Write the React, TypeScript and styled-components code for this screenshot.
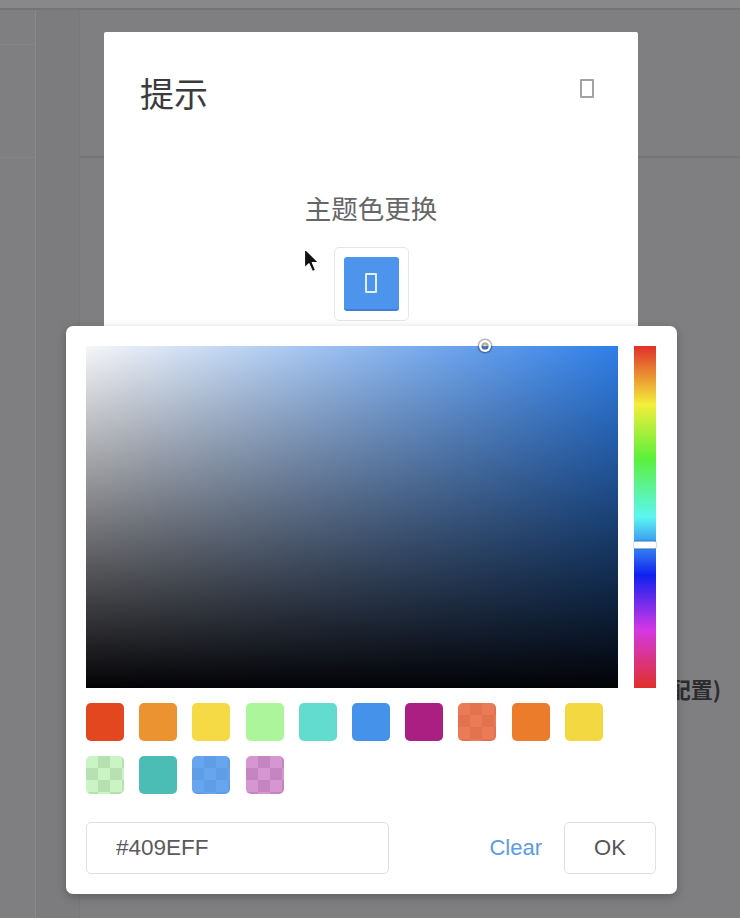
import React from "react";
import styled, { createGlobalStyle } from "styled-components";

const GlobalStyle = createGlobalStyle`
  html, body { margin: 0; padding: 0; background: #7f7f81; }
  body { font-family: "Liberation Sans", Arial, "Noto Sans CJK SC", sans-serif; overflow: hidden; }
  * { box-sizing: border-box; }
`;

const Page = styled.div`
  position: relative;
  width: 740px;
  height: 918px;
  overflow: hidden;
  display: flex;
  flex-direction: column;
  background: #7f7f81;
`;

const TopStrip = styled.div`
  flex: none;
  height: 10px;
  background: #88888a;
  border-bottom: 2px solid #747476;
`;

const Main = styled.div`
  flex: 1;
  display: flex;
`;

const Sidebar = styled.div`
  flex: none;
  width: 36px;
  display: flex;
  flex-direction: column;
  border-right: 1px solid #89898b;
`;

const SideItem = styled.div<{ $h: number }>`
  height: ${(p) => p.$h}px;
  border-bottom: 1px solid #858587;
`;

const Gutter = styled.div`
  flex: none;
  width: 44px;
  background: #7c7c7e;
  border-right: 1px solid #79797b;
`;

const Content = styled.div`
  flex: 1;
  display: flex;
  flex-direction: column;
`;

const ContentHeader = styled.div`
  flex: none;
  height: 148px;
  border-bottom: 2px solid #757577;
`;

const ContentBody = styled.div`
  flex: 1;
  display: flex;
  flex-direction: column;
  align-items: flex-end;
  padding: 515px 19px 0 0;
`;

const BgLabel = styled.div`
  font-family: "Noto Sans CJK SC", sans-serif;
  font-weight: 700;
  font-size: 22px;
  line-height: 30px;
  color: #2c2c2e;
`;

/* dialog */
const Dialog = styled.div`
  position: absolute;
  left: 104px;
  top: 32px;
  width: 534px;
  height: 300px;
  background: #ffffff;
  border-radius: 2px;
  display: flex;
  flex-direction: column;
  padding: 38px 36px 0 36px;
`;

const DialogHeader = styled.div`
  display: flex;
  justify-content: space-between;
  align-items: flex-start;
  height: 46px;
`;

const DialogTitle = styled.span`
  font-family: "Noto Sans CJK SC", sans-serif;
  font-size: 34px;
  line-height: 46px;
  color: #3b3b3d;
`;

const CloseGlyph = styled.span`
  margin-top: 9px;
  margin-right: 8px;
  width: 14px;
  height: 19px;
  border: 2px solid #a2a2a4;
  border-radius: 1px;
`;

const DialogBody = styled.div`
  margin-top: 75px;
  display: flex;
  flex-direction: column;
  align-items: center;
`;

const BodyText = styled.div`
  font-family: "Noto Sans CJK SC", sans-serif;
  font-size: 26.5px;
  line-height: 34px;
  color: #666668;
`;

const Trigger = styled.div`
  margin-top: 22px;
  width: 75px;
  height: 74px;
  padding: 9px;
  border: 1px solid #e6e6e8;
  border-radius: 5px;
`;

const TriggerColor = styled.div`
  width: 100%;
  height: 100%;
  background: #4d95ec;
  border-radius: 3px;
  border-bottom: 2px solid #3f80d2;
  display: flex;
  align-items: center;
  justify-content: center;
`;

const TriggerGlyph = styled.span`
  width: 12px;
  height: 20px;
  border: 2px solid #e2efff;
  border-radius: 1px;
`;

const Pointer = styled.svg`
  position: absolute;
  left: 303px;
  top: 247px;
`;

/* color picker dropdown */
const Panel = styled.div`
  position: absolute;
  left: 66px;
  top: 326px;
  width: 611px;
  height: 568px;
  background: #ffffff;
  border-radius: 7px;
  box-shadow: 0 3px 10px rgba(0, 0, 0, 0.25);
  padding: 20px 21px 20px 20px;
  display: flex;
  flex-direction: column;
`;

const PickerMain = styled.div`
  display: flex;
  gap: 16px;
  height: 342px;
`;

const SVPanel = styled.div<{ $hue: string }>`
  position: relative;
  width: 532px;
  height: 100%;
  background: linear-gradient(to top, #030306, rgba(0, 0, 0, 0)),
    linear-gradient(to right, #f6f6f8, rgba(255, 255, 255, 0)),
    ${(p) => p.$hue};
`;

const SVCursor = styled.div`
  position: absolute;
  top: 0;
  width: 7px;
  height: 7px;
  border-radius: 50%;
  transform: translate(-50%, -50%);
  box-shadow: 0 0 0 2.5px #ffffff, inset 0 0 2px 2px rgba(0, 0, 0, 0.35),
    0 0 1px 4px rgba(0, 0, 0, 0.3);
`;

const HueBar = styled.div`
  position: relative;
  width: 22px;
  height: 100%;
  background: linear-gradient(
    to bottom,
    #e0302a 0%,
    #f3ee3a 17%,
    #5cf03c 33%,
    #5cf6f2 50%,
    #1020f0 67%,
    #d438e4 83%,
    #e0302a 100%
  );
`;

const HueThumb = styled.div`
  position: absolute;
  left: 0;
  right: 0;
  height: 7px;
  background: #ffffff;
  border-radius: 1px;
  transform: translateY(-50%);
  box-shadow: 0 0 2px rgba(0, 0, 0, 0.5);
`;

const Predefine = styled.div`
  margin-top: 15px;
  width: 532px;
  display: flex;
  flex-wrap: wrap;
  gap: 15px 15.2px;
`;

const Swatch = styled.div<{ $color: string; $alpha?: boolean }>`
  width: 38px;
  height: 38px;
  border-radius: 5px;
  background: ${(p) =>
    p.$alpha
      ? `linear-gradient(${p.$color}, ${p.$color}), repeating-conic-gradient(#d4d4d4 0 25%, #ffffff 0 50%) 0 0 / 24px 24px`
      : p.$color};
`;

const Footer = styled.div`
  margin-top: auto;
  display: flex;
  justify-content: space-between;
  align-items: center;
  height: 52px;
`;

const HexInput = styled.input`
  width: 303px;
  height: 52px;
  border: 1px solid #dfe1e6;
  border-radius: 5px;
  padding: 0 29px;
  font-family: "Liberation Sans", Arial, sans-serif;
  font-size: 22.5px;
  color: #5a5a5c;
  background: #ffffff;
  outline: none;
`;

const Actions = styled.div`
  display: flex;
  align-items: center;
  gap: 22px;
`;

const ClearButton = styled.button`
  border: none;
  background: none;
  padding: 0;
  font-family: "Liberation Sans", Arial, sans-serif;
  font-size: 22px;
  color: #5c9be6;
  cursor: pointer;
`;

const OkButton = styled.button`
  width: 92px;
  height: 52px;
  border: 1px solid #dfe1e6;
  border-radius: 5px;
  background: #ffffff;
  font-family: "Liberation Sans", Arial, sans-serif;
  font-size: 22px;
  color: #555557;
  padding: 0;
`;

const swatches: { color: string; alpha?: boolean }[] = [
  { color: "#e2471f" },
  { color: "#eb9231" },
  { color: "#f6da45" },
  { color: "#acf59b" },
  { color: "#63dcd0" },
  { color: "#4592eb" },
  { color: "#ab1f82" },
  { color: "rgba(230, 90, 45, 0.8)", alpha: true },
  { color: "#ea7c2b" },
  { color: "#f3d842" },
  { color: "rgba(160, 235, 150, 0.55)", alpha: true },
  { color: "#4bbdb4" },
  { color: "rgba(70, 145, 235, 0.82)", alpha: true },
  { color: "rgba(185, 80, 180, 0.6)", alpha: true },
];

export default function App() {
  const hue = 0.583;
  const sat = 0.75;
  return (
    <Page>
      <GlobalStyle />
      <TopStrip />
      <Main>
        <Sidebar>
          <SideItem $h={35} />
          <SideItem $h={113} />
        </Sidebar>
        <Gutter />
        <Content>
          <ContentHeader />
          <ContentBody>
            <BgLabel>(默认配置)</BgLabel>
          </ContentBody>
        </Content>
      </Main>

      <Dialog>
        <DialogHeader>
          <DialogTitle>提示</DialogTitle>
          <CloseGlyph />
        </DialogHeader>
        <DialogBody>
          <BodyText>主题色更换</BodyText>
          <Trigger>
            <TriggerColor>
              <TriggerGlyph />
            </TriggerColor>
          </Trigger>
        </DialogBody>
      </Dialog>

      <Pointer width="19" height="27" viewBox="0 0 19 27">
        <path
          d="M1.5 1.5 L1.5 21 L6 16.8 L9.4 24.6 L12.6 23.2 L9.3 15.6 L15.4 15.4 Z"
          fill="#111"
          stroke="#fff"
          strokeWidth="1.2"
          strokeLinejoin="round"
        />
      </Pointer>

      <Panel>
        <PickerMain>
          <SVPanel $hue="#2f7fe8">
            <SVCursor style={{ left: `${sat * 100}%` }} />
          </SVPanel>
          <HueBar>
            <HueThumb style={{ top: `${hue * 100}%` }} />
          </HueBar>
        </PickerMain>
        <Predefine>
          {swatches.map((s, i) => (
            <Swatch key={i} $color={s.color} $alpha={s.alpha} />
          ))}
        </Predefine>
        <Footer>
          <HexInput readOnly value="#409EFF" />
          <Actions>
            <ClearButton>Clear</ClearButton>
            <OkButton>OK</OkButton>
          </Actions>
        </Footer>
      </Panel>
    </Page>
  );
}
